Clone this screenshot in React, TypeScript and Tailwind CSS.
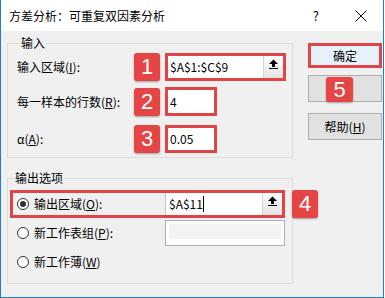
import React from "react";

function Badge({ n }: { n: number }) {
  return (
    <div className="w-[26px] h-[28px] shrink-0 rounded-[3px] bg-[#e54545] shadow-[0_1px_2px_rgba(0,0,0,0.35)] flex items-center justify-center text-white text-[22px] leading-none font-['Liberation_Sans',sans-serif]">
      {n}
    </div>
  );
}

function UploadIcon() {
  return (
    <svg width="9" height="10" viewBox="0 0 9 10">
      <polygon points="0,5 4.5,0.5 9,5" fill="#000" />
      <rect x="3" y="5" width="3" height="3" fill="#000" />
      <rect x="0" y="9" width="9" height="1" fill="#000" />
    </svg>
  );
}

function PickButton() {
  return (
    <div className="w-[20px] h-full bg-gradient-to-b from-white to-[#e3e3e3] border-l border-[#d6d6d6] flex items-start justify-center pt-[3px]">
      <UploadIcon />
    </div>
  );
}

function Radio({ checked }: { checked?: boolean }) {
  return (
    <div className="w-[12px] h-[12px] shrink-0 rounded-full border border-[#333] bg-white flex items-center justify-center">
      {checked && <div className="w-[6px] h-[6px] rounded-full bg-[#333]" />}
    </div>
  );
}

export default function App() {
  return (
    <div className="w-[384px] h-[298px] bg-[#f0f0f0] border-x border-b border-[#1a7fd4] flex flex-col text-[12px] text-black font-['Noto_Sans_CJK_SC','Noto_Sans',sans-serif]">
      {/* title bar */}
      <div className="h-[31px] shrink-0 bg-white flex items-center pl-[8px]">
        <span>方差分析：可重复双因素分析</span>
        <span className="ml-auto mr-[36px] text-[13px]">?</span>
        <svg width="12" height="12" viewBox="0 0 12 12" className="mr-[16px]">
          <line x1="0.5" y1="0.5" x2="11.5" y2="11.5" stroke="#000" strokeWidth="1" />
          <line x1="11.5" y1="0.5" x2="0.5" y2="11.5" stroke="#000" strokeWidth="1" />
        </svg>
      </div>

      <div className="flex pl-[6px]">
        <div className="w-[286px] flex flex-col">
          {/* input group */}
          <fieldset className="min-w-0 mt-[5px] h-[122px] border border-[#dcdcdc] pl-[8px]">
            <legend className="ml-[4px] px-[1px] leading-[14px]">输入</legend>

            <div className="mt-[2px] h-[29px] flex items-center">
              <span className="w-[118px] pl-[1px]">
                输入区域(<span className="underline">I</span>):
              </span>
              <Badge n={1} />
              <div className="ml-[5px] w-[121px] h-[28px] border-[3px] border-[#e04444] bg-white flex items-center">
                <span className="pl-[2px]">$A$1:$C$9</span>
                <div className="ml-auto h-full">
                  <PickButton />
                </div>
              </div>
            </div>

            <div className="mt-[6px] h-[29px] flex items-center">
              <span className="w-[118px] pl-[1px]">
                每一样本的行数(<span className="underline">R</span>):
              </span>
              <Badge n={2} />
              <div className="ml-[5px] w-[52px] h-[29px] border-[3px] border-[#e04444] bg-white flex items-center">
                <span className="pl-[2px]">4</span>
              </div>
            </div>

            <div className="mt-[9px] h-[28px] flex items-center">
              <span className="w-[118px] pl-[1px]">
                α(<span className="underline">A</span>):
              </span>
              <Badge n={3} />
              <div className="ml-[5px] w-[52px] h-[28px] border-[3px] border-[#e04444] bg-white flex items-center">
                <span className="pl-[2px]">0.05</span>
              </div>
            </div>
          </fieldset>

          {/* output group */}
          <fieldset className="min-w-0 mt-[13px] h-[113px] border border-[#dcdcdc] pl-[2px]">
            <legend className="ml-[4px] px-[1px] leading-[14px]">输出选项</legend>

            <div className="mt-[5px] h-[28px] flex items-center">
              <div className="w-[275px] h-[28px] shrink-0 border-[3px] border-[#e04444] flex items-center pl-[4px]">
                <Radio checked />
                <span className="ml-[5px]">
                  输出区域(<span className="underline">O</span>):
                </span>
                <div className="ml-auto w-[117px] h-full bg-white border-l border-[#c8c8c8] flex items-center">
                  <span className="pl-[3px]">$A$11</span>
                  <span className="w-px h-[16px] bg-black" />
                  <div className="ml-auto h-full">
                    <PickButton />
                  </div>
                </div>
              </div>
              <div className="ml-[7px]">
                <Badge n={4} />
              </div>
            </div>

            <div className="mt-[2px] h-[26px] flex items-center pl-[7px] pr-[7px]">
              <Radio />
              <span className="ml-[5px]">
                新工作表组(<span className="underline">P</span>):
              </span>
              <div className="ml-auto w-[120px] h-[26px] border border-[#adadad] bg-white p-[3px]">
                <div className="h-[15px] bg-[#f3f3f3]" />
              </div>
            </div>

            <div className="mt-[6px] h-[20px] flex items-center pl-[7px]">
              <Radio />
              <span className="ml-[5px]">
                新工作薄(<span className="underline">W</span>)
              </span>
            </div>
          </fieldset>
        </div>

        {/* buttons */}
        <div className="ml-[15px] w-[74px] flex flex-col">
          <div className="mt-[12px] h-[25px] border-[3px] border-[#e04444] bg-[#e5f1fb] flex items-center justify-center">
            确定
          </div>
          <div className="relative mt-[7px] h-[27px] border border-[#adadad] bg-[#e1e1e1]">
            <div className="absolute left-[17px] top-[1px] w-[27px] h-[25px] rounded-[3px] bg-[#e54545] shadow-[0_1px_2px_rgba(0,0,0,0.35)] flex items-center justify-center text-white text-[22px] leading-none font-['Liberation_Sans',sans-serif]">
              5
            </div>
          </div>
          <div className="mt-[11px] h-[27px] border border-[#adadad] bg-[#e1e1e1] flex items-center justify-center">
            帮助(<span className="underline">H</span>)
          </div>
        </div>
      </div>
    </div>
  );
}
